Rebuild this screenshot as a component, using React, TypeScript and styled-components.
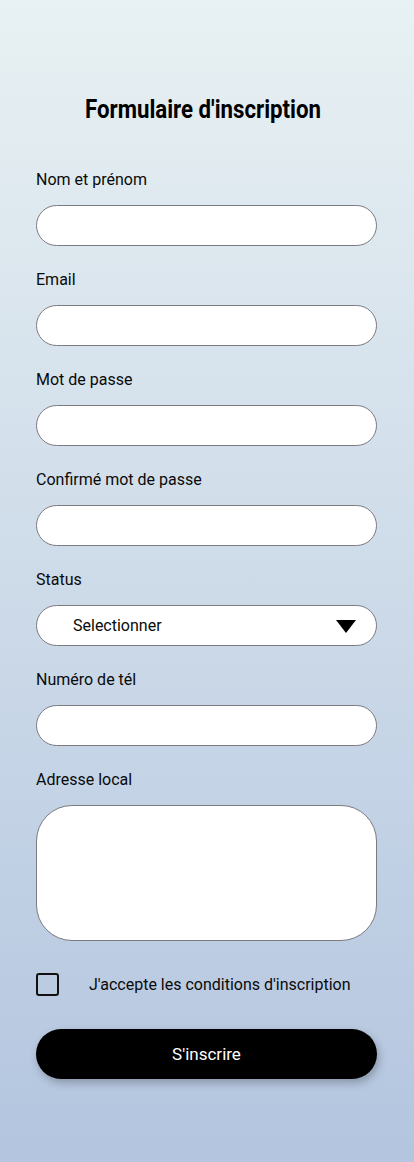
import React from "react";
import styled, { createGlobalStyle } from "styled-components";

const Global = createGlobalStyle`
  html, body { margin: 0; padding: 0; }
  body {
    font-family: Roboto, "Liberation Sans", sans-serif;
    background: linear-gradient(180deg, #e8f1f3 0%, #b3c5df 100%);
    min-height: 1162px;
  }
  * { box-sizing: border-box; }
`;

const Page = styled.div`
  width: 414px;
  min-height: 1162px;
  padding: 94px 36px 0 36px;
  display: flex;
  flex-direction: column;
`;

const Title = styled.h1`
  margin: 0 0 46px 0;
  font-family: Roboto, sans-serif;
  font-weight: 700;
  font-size: 26px;
  line-height: 30px;
  color: #000;
  text-align: center;
  transform: translateX(-4px) scaleX(0.855);
`;

const Field = styled.div`
  display: flex;
  flex-direction: column;
  margin-bottom: 24px;
`;

const Label = styled.label`
  font-size: 16px;
  line-height: 19px;
  color: #0a0a0a;
  margin-bottom: 16px;
`;

const Input = styled.input`
  width: 341px;
  height: 41px;
  border: 1px solid #7a7a80;
  border-radius: 21px;
  background: #fff;
  padding: 0 20px;
  font-family: Roboto, sans-serif;
  font-size: 16px;
  outline: none;
`;

const SelectBox = styled.div`
  width: 341px;
  height: 41px;
  border: 1px solid #7a7a80;
  border-radius: 21px;
  background: #fff;
  display: flex;
  align-items: center;
  justify-content: space-between;
  padding: 0 20px 0 36px;
  font-size: 16px;
  color: #0a0a0a;
`;

const Arrow = styled.svg`
  width: 20px;
  height: 13px;
  margin-top: 1px;
`;

const TextArea = styled.textarea`
  width: 341px;
  height: 136px;
  border: 1px solid #7a7a80;
  border-radius: 36px;
  background: #fff;
  padding: 16px 20px;
  font-family: Roboto, sans-serif;
  font-size: 16px;
  resize: none;
  outline: none;
`;

const CheckRow = styled.div`
  display: flex;
  align-items: center;
  margin-top: 8px;
  margin-bottom: 33px;
`;

const Box = styled.span`
  width: 23px;
  height: 23px;
  border: 2px solid #111;
  border-radius: 3px;
  flex: none;
`;

const CheckText = styled.span`
  margin-left: 30px;
  font-size: 16px;
  color: #0a0a0a;
`;

const Button = styled.button`
  width: 341px;
  height: 50px;
  border: none;
  border-radius: 25px;
  background: #000;
  color: #fff;
  font-family: Roboto, sans-serif;
  font-size: 17px;
  box-shadow: 2px 4px 8px rgba(0, 0, 0, 0.25);
`;

const fields = [
  "Nom et prénom",
  "Email",
  "Mot de passe",
  "Confirmé mot de passe",
];

export default function App() {
  return (
    <>
      <Global />
      <Page>
        <Title>Formulaire d'inscription</Title>
        {fields.map((f) => (
          <Field key={f}>
            <Label>{f}</Label>
            <Input type="text" />
          </Field>
        ))}
        <Field>
          <Label>Status</Label>
          <SelectBox>
            <span>Selectionner</span>
            <Arrow viewBox="0 0 20 13">
              <polygon points="0,0 20,0 10,13" fill="#000" />
            </Arrow>
          </SelectBox>
        </Field>
        <Field>
          <Label>Numéro de tél</Label>
          <Input type="text" />
        </Field>
        <Field>
          <Label>Adresse local</Label>
          <TextArea />
        </Field>
        <CheckRow>
          <Box />
          <CheckText>J'accepte les conditions d'inscription</CheckText>
        </CheckRow>
        <Button>S'inscrire</Button>
      </Page>
    </>
  );
}
